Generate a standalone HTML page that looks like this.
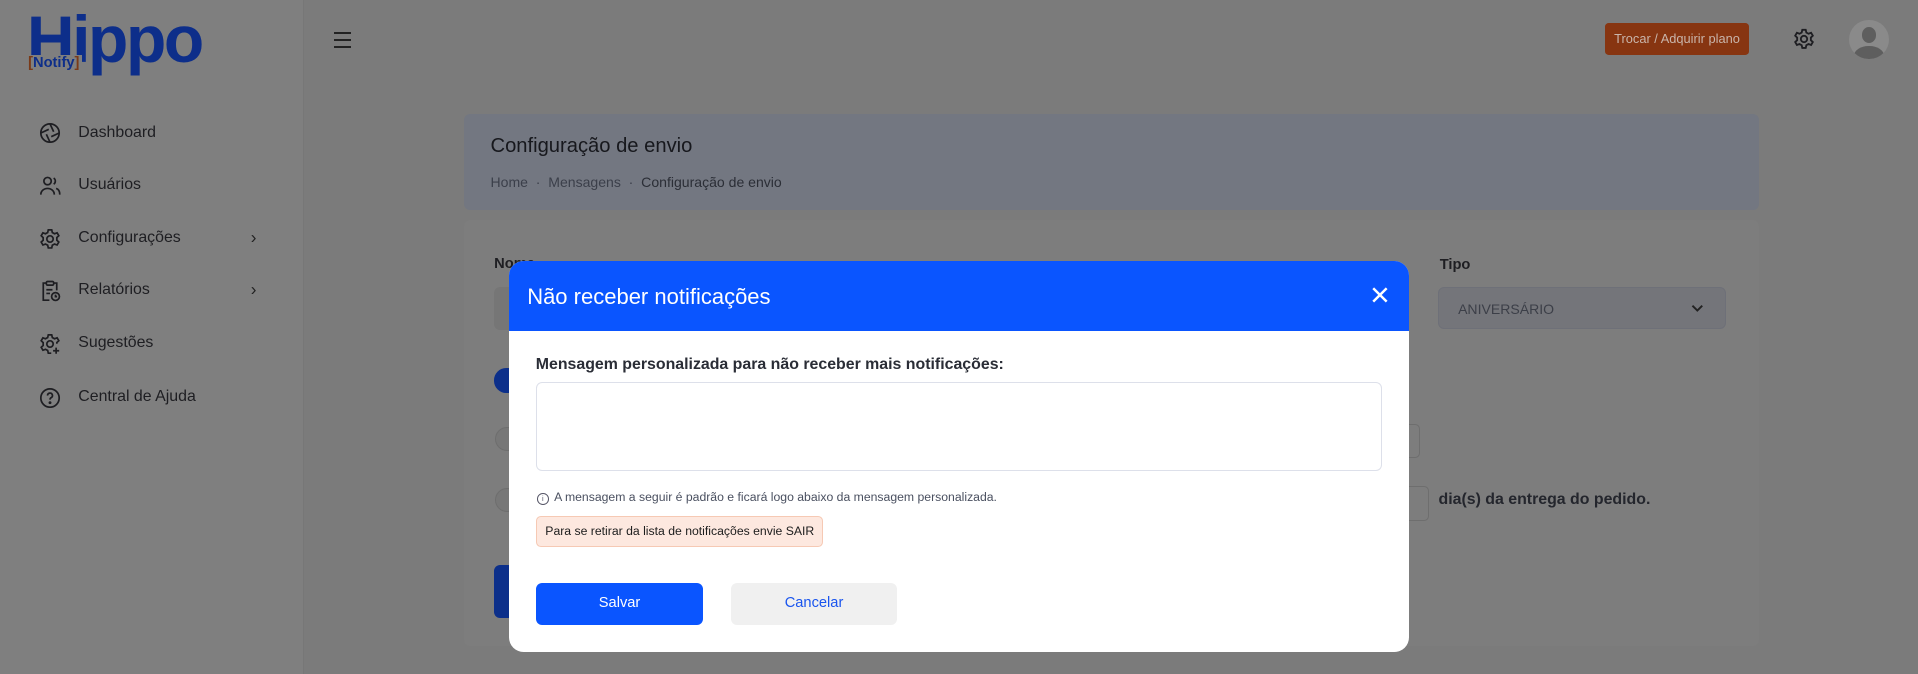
<!DOCTYPE html>
<html><head><meta charset="utf-8"><style>
html,body{margin:0;padding:0;width:1918px;height:674px;overflow:hidden;background:#7a7a7a}
#w{zoom:1.22321;position:relative;width:1568px;height:551px;font-family:"Liberation Sans",sans-serif;color:#1f1f24;overflow:hidden;background:#7b7b7b}
.a{position:absolute}
.side{left:0;top:0;width:248px;height:551px;background:#7f7f7f;border-right:1px solid #777}
.nav{left:32px;font-size:13px;color:#1e1e22}
.nav span{position:absolute;left:32px;top:0;white-space:nowrap}
.nav svg{position:absolute;left:0;top:-1px}
.chev{left:205px;font-size:14px;color:#222}
</style></head><body><div id="w">
<div class="a side"></div>
<!-- logo -->
<div class="a" style="left:22px;top:5px;font:bold 54px 'Liberation Sans',sans-serif;color:#0d2e8a;letter-spacing:-2px;line-height:54px">Hippo</div>
<div class="a" style="left:23px;top:45px;font:bold 12px 'Liberation Sans',sans-serif;color:#0d2e8a;background:#7f7f7f;padding-right:2px"><span style="color:#7a3a18">[</span>Notify<span style="color:#7a3a18">]</span></div>
<!-- nav -->
<div class="a nav" style="top:101px"><svg width="18" height="18" viewBox="0 0 18 18" fill="none" stroke="#1e1e22" stroke-width="1.4"><circle cx="9" cy="9" r="7.5"/><path d="M9 1.5L12 8M16.5 9L10 12M9 16.5L6 10M1.5 9L8 6"/></svg><span>Dashboard</span></div>
<div class="a nav" style="top:144px"><svg width="18" height="18" viewBox="0 0 18 18" fill="none" stroke="#1e1e22" stroke-width="1.4"><circle cx="7" cy="5" r="3"/><path d="M1.5 16c0-3 2.5-5 5.5-5s5.5 2 5.5 5M12 2.5a3 3 0 010 5M14 11c2 .6 3 2.5 3 5"/></svg><span>Usuários</span></div>
<div class="a nav" style="top:187px"><svg width="18" height="18" viewBox="0 0 18 18" fill="none" stroke="#1e1e22" stroke-width="1.4"><circle cx="9" cy="9" r="2.6"/><path d="M7.6 1.5h2.8l.5 2.2 1.8 1 2.1-.8 1.4 2.4-1.6 1.5v2.2l1.6 1.5-1.4 2.4-2.1-.8-1.8 1-.5 2.2H7.6l-.5-2.2-1.8-1-2.1.8-1.4-2.4 1.6-1.5V7.9L1.8 6.3l1.4-2.4 2.1.8 1.8-1z"/></svg><span>Configurações</span></div>
<div class="a chev" style="top:186px">&#x203A;</div>
<div class="a nav" style="top:230px"><svg width="18" height="18" viewBox="0 0 18 18" fill="none" stroke="#1e1e22" stroke-width="1.4"><path d="M6 2.5H3.5v14h5M12 2.5h2.5v6"/><rect x="6" y="1.2" width="6" height="3" rx="1"/><path d="M6 8h5M6 11h3"/><circle cx="13.5" cy="13.5" r="3.2"/><path d="M13.5 12v1.6h1.3"/></svg><span>Relatórios</span></div>
<div class="a chev" style="top:229px">&#x203A;</div>
<div class="a nav" style="top:273px"><svg width="18" height="18" viewBox="0 0 18 18" fill="none" stroke="#1e1e22" stroke-width="1.4"><circle cx="9" cy="9" r="2.6"/><path d="M10 16.5H7.6l-.5-2.2-1.8-1-2.1.8-1.4-2.4 1.6-1.5V7.9L1.8 6.3l1.4-2.4 2.1.8 1.8-1 .5-2.2h2.8l.5 2.2 1.8 1 2.1-.8 1.4 2.4-1.6 1.5v1M14 12v5M11.5 14.5h5"/></svg><span>Sugestões</span></div>
<div class="a nav" style="top:317px"><svg width="18" height="18" viewBox="0 0 18 18" fill="none" stroke="#1e1e22" stroke-width="1.4"><circle cx="9" cy="9" r="7.5"/><path d="M7 7a2 2 0 113 1.7c-.7.4-1 .8-1 1.6"/><circle cx="9" cy="12.8" r=".5" fill="#1e1e22"/></svg><span>Central de Ajuda</span></div>
<!-- header -->
<div class="a" style="left:273px;top:26px;width:14px;height:10px;border-top:2px solid #222;border-bottom:2px solid #222"><div style="margin-top:4px;border-top:2px solid #222"></div></div>
<div class="a" style="left:1312px;top:19px;width:118px;height:26px;background:#873511;border-radius:3px;color:#c9b5ab;font-size:10.5px;line-height:26px;text-align:center">Trocar / Adquirir plano</div>
<svg class="a" style="left:1466px;top:23px" width="18" height="18" viewBox="0 0 18 18" fill="none" stroke="#1e1e22" stroke-width="1.5"><circle cx="9" cy="9" r="2.6"/><path d="M7.6 1.5h2.8l.5 2.2 1.8 1 2.1-.8 1.4 2.4-1.6 1.5v2.2l1.6 1.5-1.4 2.4-2.1-.8-1.8 1-.5 2.2H7.6l-.5-2.2-1.8-1-2.1.8-1.4-2.4 1.6-1.5V7.9L1.8 6.3l1.4-2.4 2.1.8 1.8-1z"/></svg>
<div class="a" style="left:1512px;top:16px;width:32px;height:32px;border-radius:50%;background:#8a8a8a;overflow:hidden"><div class="a" style="left:10px;top:6px;width:12px;height:13px;border-radius:50%;background:#5e5e5e"></div><div class="a" style="left:4px;top:22px;width:24px;height:16px;border-radius:50%;background:#5e5e5e"></div></div>
<!-- page header card -->
<div class="a" style="left:379px;top:93px;width:1059px;height:79px;background:#737781;border-radius:5px"></div>
<div class="a" style="left:401px;top:110px;font-size:16.5px;color:#17181d">Configuração de envio</div>
<div class="a" style="left:401px;top:142px;font-size:11.5px;color:#3b3f4a;white-space:nowrap">Home &nbsp;·&nbsp; Mensagens &nbsp;·&nbsp; <span style="color:#2b2e36">Configuração de envio</span></div>
<!-- content card -->
<div class="a" style="left:379px;top:180px;width:1059px;height:348px;background:#7d7d7d;border-radius:5px"></div>
<div class="a" style="left:404px;top:209px;font-size:12px;font-weight:bold;color:#1e1e22">Nome</div>
<div class="a" style="left:404px;top:235px;width:30px;height:35px;background:#767676;border-radius:5px"></div>
<div class="a" style="left:404px;top:301px;width:30px;height:20px;background:#0c2f8a;border-radius:10px"></div>
<div class="a" style="left:405px;top:349px;width:24px;height:18px;background:#777;border:1px solid #6e6e6e;border-radius:10px"></div>
<div class="a" style="left:405px;top:399px;width:24px;height:18px;background:#777;border:1px solid #6e6e6e;border-radius:10px"></div>
<div class="a" style="left:404px;top:462px;width:30px;height:43px;background:#0c2f8a;border-radius:5px"></div>
<div class="a" style="left:1140px;top:347px;width:19px;height:26px;border:1px solid #6e6e6e;border-radius:4px"></div>
<div class="a" style="left:1140px;top:397px;width:27px;height:27px;border:1px solid #6e6e6e;border-radius:4px"></div>
<div class="a" style="left:1176px;top:401px;font-size:13px;font-weight:bold;color:#24262d">dia(s) da entrega do pedido.</div>
<div class="a" style="left:1177px;top:210px;font-size:12px;font-weight:bold;color:#1e1e22">Tipo</div>
<div class="a" style="left:1176px;top:235px;width:235px;height:34px;background:#74757a;border:1px solid #6e7078;border-radius:5px;box-sizing:border-box"></div>
<div class="a" style="left:1192px;top:246px;font-size:11.5px;color:#3c3f48">ANIVERSÁRIO</div>
<svg class="a" style="left:1382px;top:247px" width="12" height="10" viewBox="0 0 12 10" fill="none" stroke="#222" stroke-width="1.6"><path d="M2 3l4 4 4-4"/></svg>
<!-- modal -->
<div class="a" style="left:416px;top:213px;width:736px;height:320px;background:#fff;border-radius:12px;overflow:hidden">
 <div class="a" style="left:0;top:0;width:736px;height:58px;background:#0a55ff"></div>
 <div class="a" style="left:15px;top:19px;font-size:18px;color:#fff">Não receber notificações</div>
 <svg class="a" style="left:706px;top:22px" width="13" height="13" viewBox="0 0 13 13" stroke="#fff" stroke-width="2"><path d="M1 1l11 11M12 1L1 12"/></svg>
 <div class="a" style="left:22px;top:78px;font-size:13px;font-weight:bold;color:#2a2d36">Mensagem personalizada para não receber mais notificações:</div>
 <div class="a" style="left:22px;top:99px;width:692px;height:73px;border:1px solid #dde0ea;border-radius:5px;box-sizing:border-box"></div>
 <div class="a" style="left:23px;top:190px;width:8px;height:8px;border:1px solid #556;border-radius:50%;font-size:6px;line-height:8px;text-align:center;color:#556">i</div>
 <div class="a" style="left:37px;top:188px;font-size:10px;color:#4a5060">A mensagem a seguir é padrão e ficará logo abaixo da mensagem personalizada.</div>
 <div class="a" style="left:22px;top:209px;width:235px;height:25px;background:#fde8df;border:1px solid #f6c9b4;border-radius:4px;box-sizing:border-box;font-size:10px;line-height:23px;padding-left:7px;color:#1d1d1d">Para se retirar da lista de notificações envie SAIR</div>
 <div class="a" style="left:22px;top:264px;width:137px;height:34px;background:#0a55ff;border-radius:5px;color:#fff;font-size:12px;line-height:34px;text-align:center">Salvar</div>
 <div class="a" style="left:182px;top:264px;width:135px;height:34px;background:#f0f0f0;border-radius:5px;color:#1a55ee;font-size:12px;line-height:34px;text-align:center">Cancelar</div>
</div>
</div></body></html>
